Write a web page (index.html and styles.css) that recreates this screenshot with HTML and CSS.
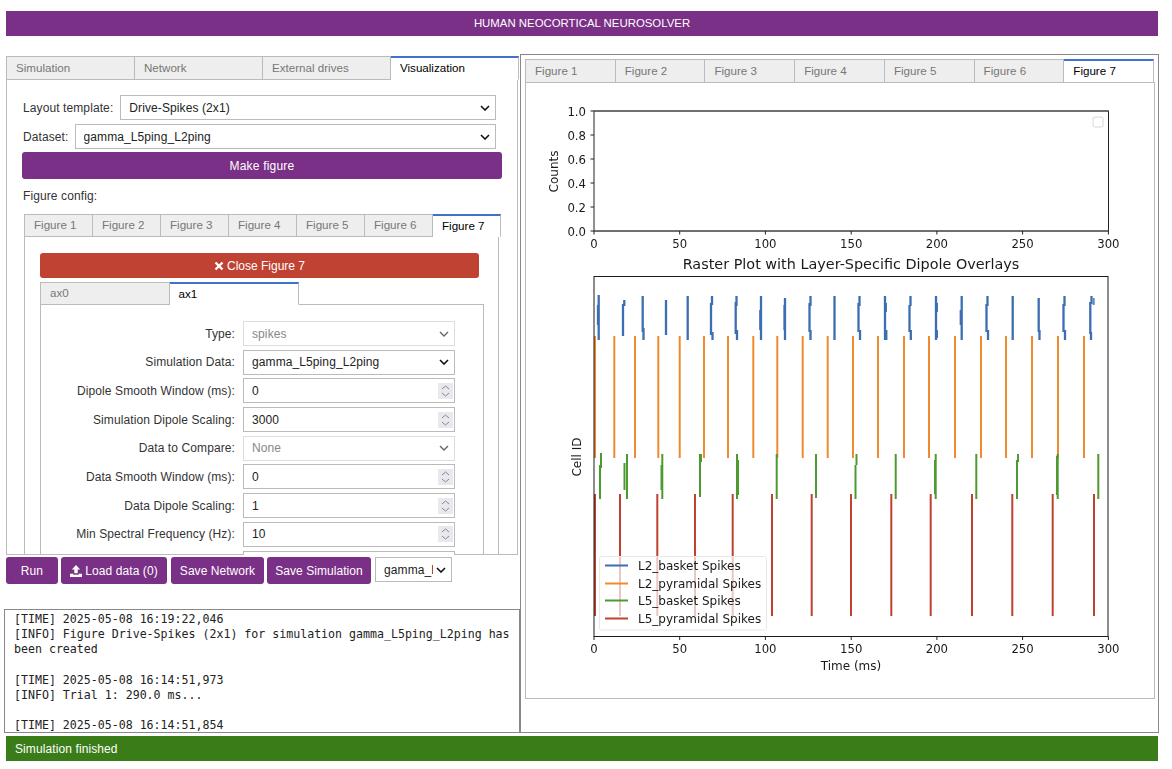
FILE: index.html
```html
<!DOCTYPE html>
<html lang="en">
<head>
<meta charset="utf-8">
<title>Human Neocortical Neurosolver</title>
<link rel="stylesheet" href="styles.css">
</head>
<body>
<div class="app">
  <header class="title-bar">HUMAN NEOCORTICAL NEUROSOLVER</header>
  <main class="main">
    <div class="left-col">
      <section class="ctrl-panel">
        <nav class="tabs tabs-main">
          <div class="tab">Simulation</div>
          <div class="tab">Network</div>
          <div class="tab">External drives</div>
          <div class="tab active">Visualization</div>
        </nav>
        <div class="ctrl-body">
          <div class="top-row">
            <label class="top-label">Layout template:</label>
            <select class="sel"><option>Drive-Spikes (2x1)</option></select>
          </div>
          <div class="top-row">
            <label class="top-label top-label-short">Dataset:</label>
            <select class="sel"><option>gamma_L5ping_L2ping</option></select>
          </div>
          <button class="btn btn-make">Make figure</button>
          <div class="fig-config">Figure config:</div>
          <nav class="tabs tabs-fig">
            <div class="tab">Figure 1</div>
            <div class="tab">Figure 2</div>
            <div class="tab">Figure 3</div>
            <div class="tab">Figure 4</div>
            <div class="tab">Figure 5</div>
            <div class="tab">Figure 6</div>
            <div class="tab active">Figure 7</div>
          </nav>
          <div class="fig-body">
            <button class="btn btn-close">
              <svg class="ico-x" viewBox="0 0 10 10"><path d="M1.5 1.5L8.5 8.5M8.5 1.5L1.5 8.5"/></svg>Close Figure 7
            </button>
            <nav class="tabs tabs-ax">
              <div class="tab">ax0</div>
              <div class="tab active">ax1</div>
            </nav>
            <div class="ax-body">
              <div class="form-row"><label>Type:</label><select class="sel sel-dis" disabled><option>spikes</option></select></div>
              <div class="form-row"><label>Simulation Data:</label><select class="sel"><option>gamma_L5ping_L2ping</option></select></div>
              <div class="form-row"><label>Dipole Smooth Window (ms):</label><div class="num"><input class="num-in" value="0"><svg class="spin" viewBox="0 0 15 16"><path d="M4 6L7.5 3L11 6M4 10L7.5 13L11 10"/></svg></div></div>
              <div class="form-row"><label>Simulation Dipole Scaling:</label><div class="num"><input class="num-in" value="3000"><svg class="spin" viewBox="0 0 15 16"><path d="M4 6L7.5 3L11 6M4 10L7.5 13L11 10"/></svg></div></div>
              <div class="form-row"><label>Data to Compare:</label><select class="sel sel-dis" disabled><option>None</option></select></div>
              <div class="form-row"><label>Data Smooth Window (ms):</label><div class="num"><input class="num-in" value="0"><svg class="spin" viewBox="0 0 15 16"><path d="M4 6L7.5 3L11 6M4 10L7.5 13L11 10"/></svg></div></div>
              <div class="form-row"><label>Data Dipole Scaling:</label><div class="num"><input class="num-in" value="1"><svg class="spin" viewBox="0 0 15 16"><path d="M4 6L7.5 3L11 6M4 10L7.5 13L11 10"/></svg></div></div>
              <div class="form-row"><label>Min Spectral Frequency (Hz):</label><div class="num"><input class="num-in" value="10"><svg class="spin" viewBox="0 0 15 16"><path d="M4 6L7.5 3L11 6M4 10L7.5 13L11 10"/></svg></div></div>
              <div class="form-row"><label></label><div class="num"></div></div>
            </div>
          </div>
        </div>
      </section>
      <div class="toolbar">
        <button class="btn btn-run">Run</button>
        <button class="btn btn-load"><svg class="ico-up" viewBox="0 0 12 12"><path d="M6 0L10.2 4.4H7.7V8.2H4.3V4.4H1.8Z"/><path d="M0 8.8H3.4V9.8H8.6V8.8H12V12H0Z"/></svg>Load data (0)</button>
        <button class="btn btn-net">Save Network</button>
        <button class="btn btn-sim">Save Simulation</button>
        <select class="sel sel-sim"><option>gamma_L5ping_L2ping</option></select>
      </div>
      <pre class="log">[TIME] 2025-05-08 16:19:22,046
[INFO] Figure Drive-Spikes (2x1) for simulation gamma_L5ping_L2ping has been created

[TIME] 2025-05-08 16:14:51,973
[INFO] Trial 1: 290.0 ms...

[TIME] 2025-05-08 16:14:51,854</pre>
    </div>
    <section class="viz-window">
      <nav class="tabs tabs-viz">
        <div class="tab">Figure 1</div>
        <div class="tab">Figure 2</div>
        <div class="tab">Figure 3</div>
        <div class="tab">Figure 4</div>
        <div class="tab">Figure 5</div>
        <div class="tab">Figure 6</div>
        <div class="tab active">Figure 7</div>
      </nav>
      <div class="viz-body">
        <svg class="chart" viewBox="526 83 628 616" width="628" height="616">
          <rect class="ax-box" x="594" y="111" width="514.5" height="120"/>
          <path class="ax-thick" d="M594 111H1108.5M594 231H1108.5"/>
          <path class="tick" d="M590.5 111H594M590.5 135H594M590.5 159H594M590.5 183H594M590.5 207H594M590.5 231H594"/>
          <path class="tick" d="M594 231V234.5M679.7 231V234.5M765.4 231V234.5M851.2 231V234.5M936.9 231V234.5M1022.6 231V234.5M1108.4 231V234.5"/>
          <g class="t-end">
            <text x="586" y="116">1.0</text>
            <text x="586" y="140">0.8</text>
            <text x="586" y="164">0.6</text>
            <text x="586" y="188">0.4</text>
            <text x="586" y="212">0.2</text>
            <text x="586" y="236">0.0</text>
          </g>
          <g class="t-mid">
            <text x="594" y="248">0</text>
            <text x="679.7" y="248">50</text>
            <text x="765.4" y="248">100</text>
            <text x="851.2" y="248">150</text>
            <text x="936.9" y="248">200</text>
            <text x="1022.6" y="248">250</text>
            <text x="1108.4" y="248">300</text>
            <text class="t-title" x="851" y="269">Raster Plot with Layer-Specific Dipole Overlays</text>
            <text class="t-lab" transform="translate(558 171.5) rotate(-90)">Counts</text>
            <text class="t-lab" transform="translate(581 457) rotate(-90)">Cell ID</text>
          </g>
          <rect class="leg-empty" x="1093" y="117" width="10" height="10" rx="2"/>

          <path class="sp sp-blue" d="M598.7 295V340M598 305V325M624.3 300V306M623 304V336M642.7 296V332M643.5 328V340M666 300V335M687.7 296V340M712 296V305M711 303V335M712.5 332V340M736.5 296V306M735.7 302V334M737 330V340M761 296V340M760.3 310V330M785 298V340M784.5 305V330M810.5 296V306M809.5 303V332M810.5 330V340M834.5 296V340M859.5 296V306M858.5 303V332M860 330V340M885 296V340M885.8 303V312M886.3 330V340M910.5 296V306M909.5 305V332M910.8 330V340M936 296V340M936.8 303V312M936.8 330V338M961.7 296V340M960.8 310V325M987.5 296V306M986.5 304V332M988 330V340M1012.7 296V340M1038.7 298V332M1039.5 330V340M1064.5 296V306M1063.5 304V332M1065 330V340M1090.3 302V334M1091.5 296V304M1091 332V340"/>
          <path class="sp sp-dot" d="M1093.7 298V305"/>
          <path class="sp sp-orange" d="M595 336V458M614.3 336V458M635 336V458M658.3 336V458M679.7 336V458M704 336V458M728 336V458M753.3 336V458M777.3 336V458M802.7 336V458M827.7 336V458M853 336V458M878 336V458M904 336V458M929 336V458M955 336V458M981 336V458M1006 336V458M1032 336V458M1058 336V458M1084 336V458"/>
          <path class="sp sp-green" d="M600 465V499M601 453V468M624.5 463V490M627 454V499M662.3 454V499M661.5 465V490M700 454V497M701 454V462M737 454V499M738 460V495M776.7 454V499M816 454V498M855.5 465V499M856.5 454V465M895.7 454V499M935.7 454V499M935 460V494M976.3 454V499M1017 460V499M1018 454V462M1057 456V495M1057.7 454V499M1098.3 454V499"/>
          <path class="sp sp-red" d="M595 494V616M620 494V616M657.3 494V616M695 494V616M732.7 494V616M772 494V616M811.7 494V616M851 494V616M891.3 494V616M930.7 494V616M972 494V616M1012.3 494V616M1052.7 494V616M1094 494V616"/>
          <rect class="ax-line" x="594" y="276.5" width="514" height="360"/>
          <path class="tick" d="M594 636.5V640M679.7 636.5V640M765.4 636.5V640M851.2 636.5V640M936.9 636.5V640M1022.6 636.5V640M1108.4 636.5V640"/>
          <rect class="leg-box" x="599.5" y="556.5" width="167" height="73.5" rx="2"/>
          <path class="leg-l sp-blue" d="M605 565.5H628"/>
          <path class="leg-l sp-orange" d="M605 583.5H628"/>
          <path class="leg-l sp-green" d="M605 600.5H628"/>
          <path class="leg-l sp-red" d="M605 618.5H628"/>
          <g class="t-start">
            <text x="638" y="570">L2_basket Spikes</text>
            <text x="638" y="588">L2_pyramidal Spikes</text>
            <text x="638" y="605">L5_basket Spikes</text>
            <text x="638" y="623">L5_pyramidal Spikes</text>
          </g>
          <g class="t-mid">
            <text x="594" y="653">0</text>
            <text x="679.7" y="653">50</text>
            <text x="765.4" y="653">100</text>
            <text x="851.2" y="653">150</text>
            <text x="936.9" y="653">200</text>
            <text x="1022.6" y="653">250</text>
            <text x="1108.4" y="653">300</text>
            <text class="t-lab" x="851" y="670">Time (ms)</text>
          </g>
        </svg>
      </div>
    </section>
  </main>
  <footer class="status">Simulation finished</footer>
</div>
</body>
</html>
```
FILE: styles.css
```css
* { box-sizing: border-box; }
html, body { margin: 0; padding: 0; background: #fff; }
body {
  font-family: "Liberation Sans", Arial, sans-serif;
  font-size: 12px;
  letter-spacing: .1px;
  color: #333;
  overflow: hidden;
}
.app { width: 1172px; height: 769px; padding-top: 11px; }
.title-bar {
  margin-left: 6px;
  width: 1152px;
  height: 25px;
  line-height: 25px;
  background: #7a3086;
  color: #fff;
  text-align: center;
  font-size: 11.4px;
  letter-spacing: 0;
}
.main { display: flex; margin-top: 18px; height: 679px; }
.left-col { width: 516px; margin-left: 4px; display: flex; flex-direction: column; }

.ctrl-panel {
  margin: 2px 0 0 2px;
  width: 513px;
  height: 499px;
  overflow: hidden;
  display: flex;
  flex-direction: column;
}
.tabs { display: flex; flex: none; }
.tab {
  background: #eee;
  border: 1px solid #bbb;
  border-left-width: 0;
  color: #777;
  padding-left: 9px;
  white-space: nowrap;
  font-size: 11.6px;
  letter-spacing: 0;
}
.tab:first-child { border-left-width: 1px; }
.tab.active {
  background: #fff;
  color: #000;
  border-top: 2px solid #3f72c8;
  border-bottom-color: transparent;
}
.tabs-main { height: 24px; }
.tabs-main .tab { width: 128px; line-height: 21px; }
.tabs-main .tab:first-child { width: 129px; }
.tabs-main .tab.active { line-height: 20px; }
.ctrl-body {
  flex: 1;
  width: 512px;
  border: 1px solid #bbb;
  border-top: 0;
  padding: 15px 15px 0;
  min-height: 0;
}
.top-row { display: flex; align-items: center; height: 25px; margin-bottom: 4px; padding-right: 6px; }
.top-label { margin-right: 7px; white-space: nowrap; margin-left: 1px; }
.top-label-short { margin-right: 6px; }
.sel {
  appearance: none;
  -webkit-appearance: none;
  flex: 1;
  min-width: 0;
  height: 100%;
  border: 1px solid #bbb;
  border-radius: 0;
  padding: 0 24px 0 8px;
  font: inherit;
  letter-spacing: .1px;
  color: #222;
  background: #fff url("data:image/svg+xml,%3Csvg xmlns='http://www.w3.org/2000/svg' width='10' height='6'%3E%3Cpath d='M1 1L5 5L9 1' fill='none' stroke='%23111' stroke-width='1.6'/%3E%3C/svg%3E") no-repeat right 5px center;
}
.sel-dis {
  border-color: #ddd;
  color: #888;
  opacity: 1;
  background-image: url("data:image/svg+xml,%3Csvg xmlns='http://www.w3.org/2000/svg' width='10' height='6'%3E%3Cpath d='M1 1L5 5L9 1' fill='none' stroke='%23666' stroke-width='1.4'/%3E%3C/svg%3E");
}
.btn {
  border: 0;
  border-radius: 3px;
  background: #7a3086;
  color: #fff;
  font: inherit;
  letter-spacing: .1px;
  padding: 0;
  display: flex;
  align-items: center;
  justify-content: center;
}
.btn-make { width: 480px; height: 27px; margin-top: -1px; letter-spacing: .2px; }
.fig-config { margin: 10px 0 0 1px; line-height: 14px; }
.tabs-fig { margin: 11px 0 0 2px; height: 23px; }
.tabs-fig .tab { width: 68px; line-height: 20px; }
.tabs-fig .tab:first-child { width: 69px; }
.tabs-fig .tab.active { line-height: 19px; }
.fig-body {
  margin-left: 2px;
  width: 475px;
  height: 330px;
  border: 1px solid #bbb;
  border-top: 0;
  margin-top: -1px;
  padding: 17px 14px 0 15px;
}
.btn-close { width: 439px; height: 25px; background: #c04233; letter-spacing: 0; }
.ico-x { width: 10px; height: 10px; margin-right: 3px; fill: none; stroke: #fff; stroke-width: 2.4; }
.tabs-ax { margin-top: 4px; height: 23px; position: relative; z-index: 1; }
.tabs-ax .tab { width: 129px; line-height: 20px; }
.tabs-ax .tab.active { line-height: 19px; }
.tabs-ax .tab:first-child { width: 129.5px; }
.ax-body {
  border: 1px solid #bbb;
  margin-top: -1px;
  width: 444px;
  height: 300px;
  padding-top: 16px;
}
.form-row {
  display: grid;
  grid-template-columns: 194px 212px;
  column-gap: 8px;
  align-items: center;
  height: 25px;
  margin-bottom: 3.7px;
}
.form-row label { text-align: right; white-space: nowrap; }
.form-row .sel { height: 25px; width: 212px; }
.num {
  height: 25px;
  border: 1px solid #bbb;
  display: flex;
  align-items: center;
  padding: 0 1px 0 0;
  background: #fff;
}
.num-in {
  flex: 1;
  min-width: 0;
  height: 100%;
  border: 0;
  outline: 0;
  padding: 0 0 0 8px;
  font: inherit;
  letter-spacing: .1px;
  color: #222;
  background: transparent;
}
.spin { width: 15px; height: 16px; flex: none; background: #e8e8ee; fill: none; stroke: #888; stroke-width: 1; }

.toolbar { display: flex; align-items: flex-start; margin: 2px 0 0 2px; height: 52px; }
.toolbar .btn { height: 27px; }
.btn-run { width: 52px; }
.btn-load { width: 106px; margin-left: 3px; }
.btn-net { width: 93px; margin-left: 4px; letter-spacing: .05px; }
.btn-sim { width: 104px; margin-left: 3px; letter-spacing: .05px; }
.ico-up { width: 12px; height: 12px; margin-right: 3px; fill: #fff; }
.sel-sim { flex: none; width: 77px; height: 25px; margin-left: 4px; padding-right: 18px; }

.log {
  margin: 0;
  width: 516px;
  height: 124px;
  border: 1px solid #888;
  padding: 2px 6px 0 9px;
  font-family: "DejaVu Sans Mono", "Liberation Mono", monospace;
  font-size: 11.6px;
  letter-spacing: 0;
  line-height: 15.2px;
  color: #222;
  white-space: pre-wrap;
  overflow: hidden;
}

.viz-window {
  width: 639px;
  height: 679px;
  border: 1px solid #888;
  padding: 4px 4px 0;
  display: flex;
  flex-direction: column;
}
.tabs-viz { height: 24px; }
.tabs-viz .tab { width: 89.8px; line-height: 21px; }
.tabs-viz .tab:first-child { width: 90.8px; }
.tabs-viz .tab.active { line-height: 20px; }
.viz-body {
  margin-top: -1px;
  width: 630px;
  height: 617px;
  border: 1px solid #bbb;
}
.chart {
  display: block;
  filter: blur(.35px);
  font-family: "DejaVu Sans", sans-serif;
  font-size: 11.7px;
  letter-spacing: 0;
  fill: #1a1a1a;
}
.ax-box { fill: #fff; stroke: #222; stroke-width: 1; }
.ax-thick { stroke: #666; stroke-width: 1.6; fill: none; }
.ax-line { fill: none; stroke: #1a1a1a; stroke-width: 1; }
.tick { stroke: #222; stroke-width: 1; fill: none; }
.t-end text { text-anchor: end; }
.t-mid text { text-anchor: middle; }
.t-start text { text-anchor: start; }
.t-start text, .t-mid .t-lab { font-size: 12px; }
.t-mid .t-title { font-size: 14.4px; }
.leg-empty { fill: #fff; stroke: #d8d8d8; stroke-width: 1; }
.leg-box { fill: rgba(255, 255, 255, .7); stroke: #e8e8e8; stroke-width: 1; }
.leg-l { fill: none; stroke-width: 2; }
.sp { fill: none; stroke-width: 2; }
.sp-blue { stroke: #3c6fb1; }
.sp.sp-blue { stroke-width: 2.3; }
.sp-dot { stroke: #5b8ac0; stroke-width: 2; }
.sp-orange { stroke: #ef8a2f; }
.sp-green { stroke: #4d9b30; }
.sp-red { stroke: #c0412f; }

.status {
  margin: 3px 0 0 6px;
  width: 1152px;
  height: 25px;
  line-height: 26px;
  padding-left: 9px;
  background: #3a7c17;
  color: #fff;
}
```
